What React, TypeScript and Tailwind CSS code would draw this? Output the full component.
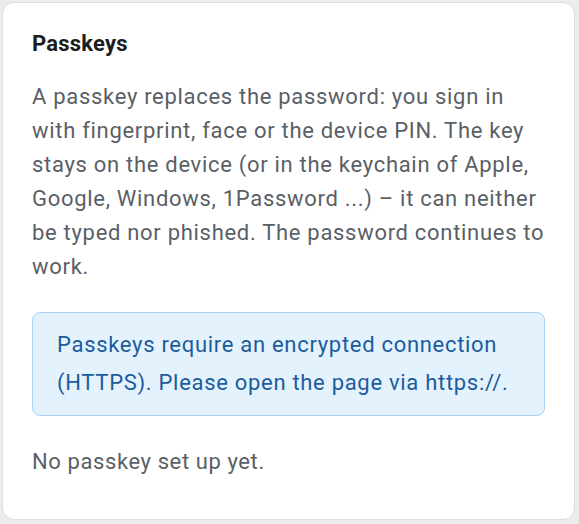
import React from 'react';

const intro = [
  'A passkey replaces the password: you sign in',
  'with fingerprint, face or the device PIN. The key',
  'stays on the device (or in the keychain of Apple,',
  'Google, Windows, 1Password ...) – it can neither',
  'be typed nor phished. The password continues to',
  'work.',
];

const notice = ['Passkeys require an encrypted connection', '(HTTPS). Please open the page via https://.'];

export default function App() {
  return (
    <div
      className="min-h-screen bg-[#ececec] p-[2px] pr-[4px] pb-[4px]"
      style={{ fontFamily: 'Roboto, "Noto Sans", sans-serif' }}
    >
      <div className="h-[518px] rounded-[12px] border border-[#dedede] bg-white pl-[29px] pr-[20px] pt-[28px]">
        <h2 className="text-[22px] font-bold leading-[26px] tracking-[0.2px] text-[#1a1d21]">Passkeys</h2>
        <p className="mt-[23px] whitespace-nowrap text-[22px] leading-[34px] tracking-[0.7px] text-[#5a5f66]">
          {intro.map((line, i) => (
            <span key={i} className="block">
              {line}
            </span>
          ))}
        </p>
        <div className="mr-[9px] mt-[28px] whitespace-nowrap rounded-[8px] border border-[#a6d3f7] bg-[#e4f2fd] px-[24px] py-[13px] text-[22px] leading-[38px] tracking-[0.7px] text-[#1b5c9c]">
          {notice.map((line, i) => (
            <span key={i} className="block">
              {line}
            </span>
          ))}
        </div>
        <p className="mt-[29px] text-[22px] leading-[34px] tracking-[0.6px] text-[#5a5f66]">No passkey set up yet.</p>
      </div>
    </div>
  );
}
